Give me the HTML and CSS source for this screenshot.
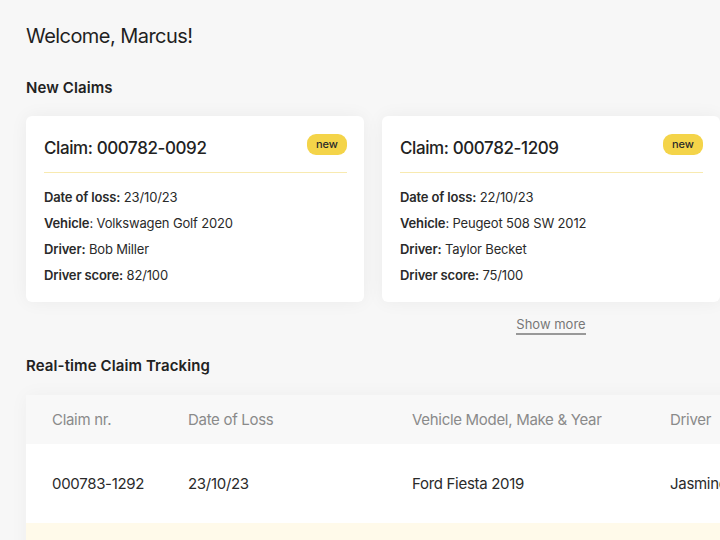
FILE: index.html
```html
<!DOCTYPE html>
<html>
<head>
<meta charset="utf-8">
<link rel="stylesheet" href="styles.css">
</head>
<body>
<main class="page">
  <h1 class="welcome">Welcome, Marcus!</h1>
  <h2 class="section-title">New Claims</h2>
  <div class="cards">
    <article class="card">
      <div class="card-head">
        <span class="card-title">Claim: 000782-0092</span>
        <span class="badge">new</span>
      </div>
      <div class="card-body">
        <p><b>Date of loss:</b> 23/10/23</p>
        <p><b>Vehicle</b>: Volkswagen Golf 2020</p>
        <p><b>Driver:</b> Bob Miller</p>
        <p><b>Driver score:</b> 82/100</p>
      </div>
    </article>
    <article class="card">
      <div class="card-head">
        <span class="card-title">Claim: 000782-1209</span>
        <span class="badge">new</span>
      </div>
      <div class="card-body">
        <p><b>Date of loss:</b> 22/10/23</p>
        <p><b>Vehicle</b>: Peugeot 508 SW 2012</p>
        <p><b>Driver:</b> Taylor Becket</p>
        <p><b>Driver score:</b> 75/100</p>
      </div>
    </article>
    <div class="more-cell"></div>
    <div class="more-cell"><a class="show-more">Show more</a></div>
  </div>
  <h2 class="section-title tracking">Real-time Claim Tracking</h2>
  <div class="table">
    <div class="row head">
      <span class="c1">Claim nr.</span>
      <span class="c2">Date of Loss</span>
      <span class="c3">Vehicle Model, Make &amp; Year</span>
      <span class="c4">Driver</span>
    </div>
    <div class="row">
      <span class="c1">000783-1292</span>
      <span class="c2">23/10/23</span>
      <span class="c3">Ford Fiesta 2019</span>
      <span class="c4">Jasmine Wright</span>
    </div>
    <div class="row alt">
      <span class="c1">000783-1293</span>
      <span class="c2">22/10/23</span>
      <span class="c3">Renault Clio 2018</span>
      <span class="c4">Tom Hardy</span>
    </div>
  </div>
</main>
</body>
</html>
```
FILE: styles.css
```css
html, body {
  margin: 0;
  padding: 0;
  background: #f7f7f7;
  overflow: hidden;
  width: 720px;
  height: 540px;
}
.page {
  font-family: Inter, "Noto Sans", sans-serif;
  color: #222;
  padding: 24px 0 0 26px;
}
.welcome {
  margin: 0;
  font-size: 20px;
  line-height: 24px;
  font-weight: 400;
  letter-spacing: -0.55px;
  color: #1f1f1f;
}
.section-title {
  margin: 30px 0 0;
  font-size: 15px;
  line-height: 20px;
  font-weight: 600;
  letter-spacing: 0.1px;
  color: #222;
}
.cards {
  display: grid;
  grid-template-columns: 338px 338px;
  column-gap: 18px;
  margin-top: 18px;
}
.card {
  background: #fff;
  border-radius: 6px;
  box-shadow: 0 0 18px rgba(0,0,0,0.05);
  padding: 18px 17px 14px 18px;
}
.card-head {
  display: flex;
  justify-content: space-between;
  align-items: flex-start;
  height: 24px;
  padding-bottom: 14px;
  border-bottom: 1px solid #f8eab0;
}
.card-title {
  font-size: 17px;
  line-height: 24px;
  font-weight: 500;
  letter-spacing: -0.4px;
  padding-top: 2px;
  color: #222;
}
.badge {
  background: #f4d449;
  color: #2a2a2a;
  font-size: 11px;
  line-height: 21px;
  height: 21px;
  padding: 0 9px;
  border-radius: 9px;
  font-weight: 500;
}
.card-body {
  padding-top: 11px;
}
.card-body p {
  margin: 0;
  font-size: 13px;
  line-height: 26px;
  letter-spacing: -0.15px;
  color: #2a2a2a;
}
.card-body b {
  font-weight: 600;
}
.more-cell {
  display: flex;
  justify-content: center;
  padding-top: 14px;
}
.show-more {
  font-size: 13px;
  line-height: 17px;
  color: #777;
  border-bottom: 2px solid #999;
}
.tracking {
  margin-top: 21px;
}
.table {
  margin-top: 19px;
  background: #fff;
  box-shadow: 0 0 18px rgba(0,0,0,0.04);
  width: 760px;
}
.row {
  display: flex;
  align-items: center;
  height: 79px;
  padding-left: 26px;
  font-size: 15px;
  letter-spacing: -0.3px;
  color: #2a2a2a;
  white-space: nowrap;
}
.row.head {
  height: 49px;
  background: #f8f8f8;
  color: #8a8a8a;
}
.row.alt {
  background: #fffaea;
}
.row span { flex-shrink: 0; }
.c1 { width: 136px; }
.c2 { width: 224px; }
.c3 { width: 258px; }
.c4 { width: 140px; }
```
